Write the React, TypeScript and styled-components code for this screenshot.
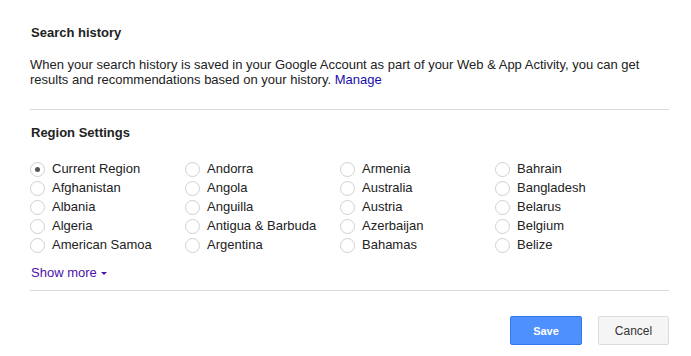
import styled, { createGlobalStyle } from "styled-components";

// Global page reset
const GlobalStyle = createGlobalStyle`
    body {
        margin: 0;
        background: #fff;
        font-family: "Liberation Sans", Arial, sans-serif;
        color: #222;
    }
`

const Page = styled.div`
    padding: 25px 22px 11px 31px;
    display: flex;
    flex-direction: column;
`
const Title = styled.h2`
    margin: 0;
    font-size: 13px;
    line-height: 15px;
    font-weight: bold;
    color: #222;
`
const Paragraph = styled.p`
    margin: 17px 0 0 -1px;
    font-size: 13px;
    line-height: 15px;
    color: #222;
`
const Link = styled.a`
    color: ${props => props.color || "#1a0dab"};
    text-decoration: none;
    cursor: pointer;
`
const Divider = styled.hr<{ $top: number }>`
    margin: ${props => props.$top}px 0 0 -1px;
    border: none;
    height: 1px;
    background: #dadada;
`
const SectionTitle = styled(Title)`
    margin-top: 15px;
`
const RegionGrid = styled.div`
    margin-top: 19px;
    margin-left: -1px;
    display: grid;
    grid-template-columns: repeat(4, 155px);
    grid-template-rows: repeat(5, 19px);
    grid-auto-flow: column;
`
const Option = styled.label`
    display: flex;
    align-items: center;
    gap: 7px;
    font-size: 13px;
    line-height: 19px;
    color: #222;
    white-space: nowrap;
`
const Radio = styled.span<{ $checked?: boolean }>`
    width: 13px;
    height: 13px;
    border: 1px solid #d0d0d0;
    border-radius: 50%;
    background: #fff;
    display: flex;
    align-items: center;
    justify-content: center;
    flex: none;
    margin-top: 1px;
    &::after {
        content: "";
        width: 5px;
        height: 5px;
        border-radius: 50%;
        background: ${props => props.$checked ? "#555" : "transparent"};
    }
`
const ShowMore = styled.div`
    margin-top: 11px;
    font-size: 13px;
    line-height: 15px;
    color: #4b11a8;
    display: flex;
    align-items: center;
    gap: 4px;
`
const Caret = styled.span`
    width: 0;
    height: 0;
    border-left: 3px solid transparent;
    border-right: 3px solid transparent;
    border-top: 3px solid #4b11a8;
    margin-top: 2px;
`
const Actions = styled.div`
    margin-top: 25px;
    display: flex;
    justify-content: flex-end;
    gap: 16px;
`
const Button = styled.button<{ $primary?: boolean }>`
    width: ${props => props.$primary ? "72px" : "71px"};
    height: 29px;
    border-radius: 2px;
    font-family: "Liberation Sans", Arial, sans-serif;
    font-size: ${props => props.$primary ? "11px" : "12px"};
    font-weight: ${props => props.$primary ? "bold" : "normal"};
    color: ${props => props.$primary ? "#fff" : "#333"};
    background: ${props => props.$primary ? "#4d90fe" : "#f5f5f5"};
    border: 1px solid ${props => props.$primary ? "#3079ed" : "#dcdcdc"};
    padding: 0;
    cursor: pointer;
`

const regions = [
    "Current Region", "Afghanistan", "Albania", "Algeria", "American Samoa",
    "Andorra", "Angola", "Anguilla", "Antigua & Barbuda", "Argentina",
    "Armenia", "Australia", "Austria", "Azerbaijan", "Bahamas",
    "Bahrain", "Bangladesh", "Belarus", "Belgium", "Belize",
];

const App = () => {
    return (
        <>
            <GlobalStyle />
            <Page>
                <Title>Search history</Title>
                <Paragraph>
                    When your search history is saved in your Google Account as part of your Web &amp; App Activity, you can get results and recommendations based on your history. <Link>Manage</Link>
                </Paragraph>
                <Divider $top={22} />
                <SectionTitle>Region Settings</SectionTitle>
                <RegionGrid>
                    {regions.map((name, i) => (
                        <Option key={name}>
                            <Radio $checked={i === 0} />
                            {name}
                        </Option>
                    ))}
                </RegionGrid>
                <ShowMore>
                    Show more <Caret />
                </ShowMore>
                <Divider $top={10} />
                <Actions>
                    <Button $primary>Save</Button>
                    <Button>Cancel</Button>
                </Actions>
            </Page>
        </>
    )
}

export default App;
